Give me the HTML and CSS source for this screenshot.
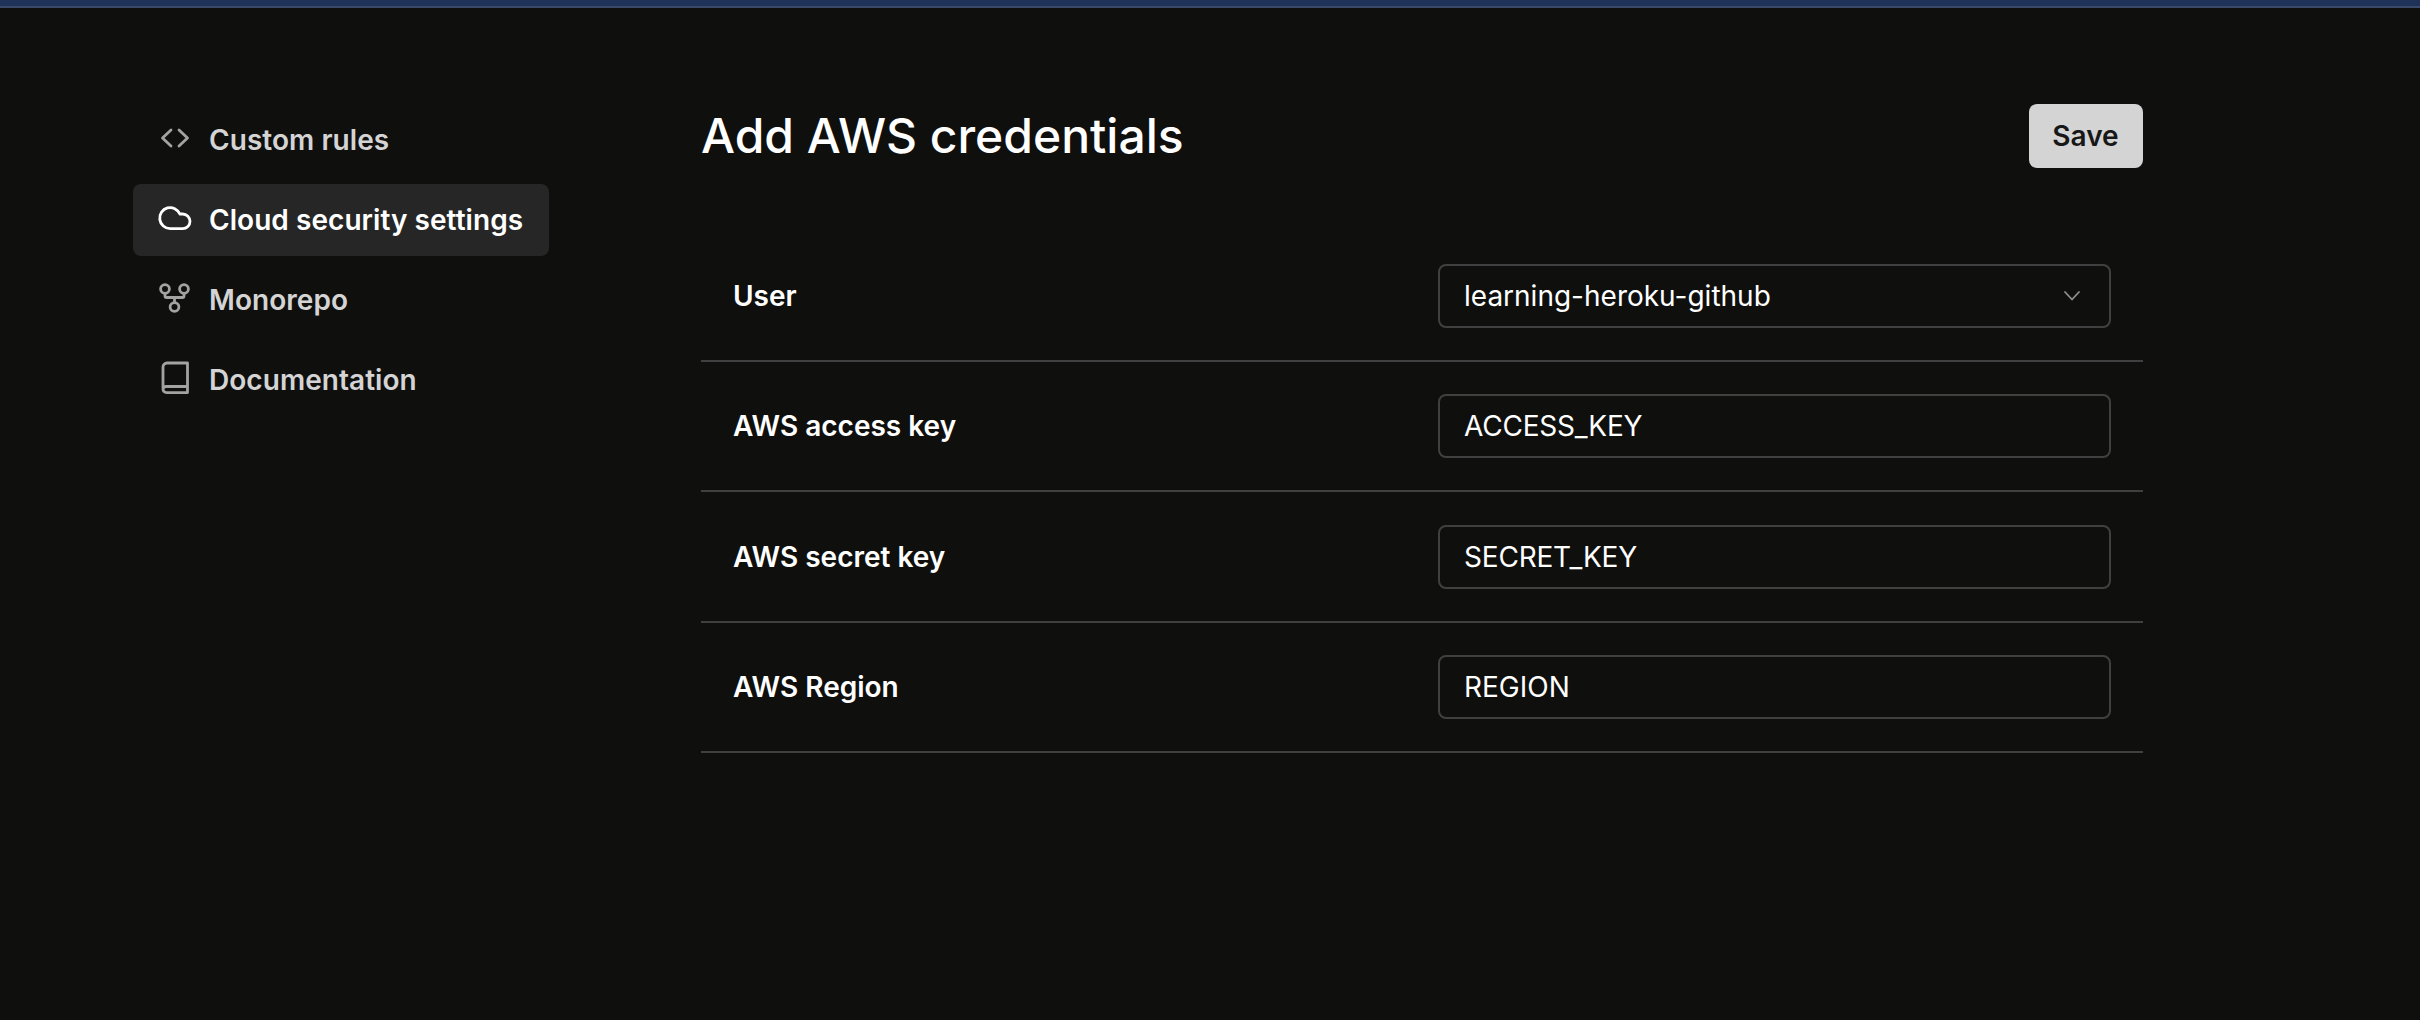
FILE: index.html
```html
<!DOCTYPE html>
<html lang="en">
<head>
<meta charset="utf-8">
<title>Add AWS credentials</title>
<link rel="stylesheet" href="styles.css">
</head>
<body>
<div class="topbar"></div>
<div class="page">
  <nav class="sidebar">
    <a class="nav-item">
      <svg class="icon" viewBox="0 0 40 40"><path d="M16 12l-8.500 8 8.500 8M24 12l8.500 8-8.500 8"/></svg>
      <span>Custom rules</span>
    </a>
    <a class="nav-item active">
      <svg class="icon" viewBox="0 0 40 40"><path d="M28 30.600H15.200A10.500 10.500 0 1 1 24.870 16H27.700A7.300 7.300 0 1 1 27.700 30.600Z"/></svg>
      <span>Cloud security settings</span>
    </a>
    <a class="nav-item">
      <svg class="icon" viewBox="0 0 40 40"><circle cx="10" cy="11" r="4.400"/><circle cx="29" cy="11" r="4.400"/><circle cx="19.500" cy="29" r="4.400"/><path d="M10 15.400v2.600a1.500 1.500 0 0 0 1.500 1.500h16a1.500 1.500 0 0 0 1.500-1.500v-2.600M19.500 19.500v5.100"/></svg>
      <span>Monorepo</span>
    </a>
    <a class="nav-item">
      <svg class="icon" viewBox="0 0 40 40"><path d="M8 31V9a4 4 0 0 1 4-4h20.500v29.600H11.500A3.500 3.500 0 0 1 8 31zM8 31.500a3 3 0 0 1 3-3h21.500"/></svg>
      <span>Documentation</span>
    </a>
  </nav>
  <main class="content">
    <header class="head">
      <h1 class="title">Add AWS credentials</h1>
      <button class="save" type="button">Save</button>
    </header>
    <div class="form">
      <div class="row">
        <label class="label">User</label>
        <div class="field select">
          <span>learning-heroku-github</span>
          <svg class="chevron" viewBox="0 0 20 20"><path d="M3 6l7 7.500L17 6"/></svg>
        </div>
      </div>
      <div class="row">
        <label class="label">AWS access key</label>
        <div class="field tight">ACCESS_KEY</div>
      </div>
      <div class="row">
        <label class="label">AWS secret key</label>
        <div class="field tight">SECRET_KEY</div>
      </div>
      <div class="row">
        <label class="label">AWS Region</label>
        <div class="field">REGION</div>
      </div>
    </div>
  </main>
</div>
</body>
</html>
```

FILE: styles.css
```css
* { box-sizing: border-box; }
html, body { margin: 0; height: 100%; }
body {
  background: #0f0f0e;
  color: #fff;
  font-family: Inter, "Liberation Sans", sans-serif;
  font-size: 28px;
  overflow: hidden;
}
.topbar {
  height: 8px;
  background: #1f3358;
  border-bottom: 2px solid #3a4a6b;
}
.page {
  display: flex;
  align-items: flex-start;
  padding: 96px 0 0 133px;
}
.sidebar {
  width: 416px;
  margin-right: 152px;
  display: flex;
  flex-direction: column;
  gap: 8px;
  flex: none;
}
.nav-item {
  height: 72px;
  display: flex;
  align-items: center;
  gap: 14px;
  padding-left: 22px;
  border-radius: 8px;
  color: #d4d4d4;
  font-weight: 600;
  letter-spacing: 0.050px;
}
.nav-item.active { background: #262626; color: #fff; }
.icon {
  width: 40px;
  height: 40px;
  flex: none;
  fill: none;
  stroke: #a3a3a3;
  stroke-width: 2.800;
  stroke-linecap: round;
  stroke-linejoin: round;
  margin-top: -4px;
}
.active .icon { stroke: #fff; }
.content { width: 1441.500px; flex: none; }
.head {
  display: flex;
  justify-content: space-between;
  align-items: center;
  height: 64px;
  margin-bottom: 63px;
}
.title {
  margin: 0;
  font-size: 48px;
  font-weight: 500;
  line-height: 64px;
}
.save {
  width: 114px;
  height: 64px;
  border: 0;
  border-radius: 8px;
  background: #d4d4d4;
  color: #171717;
  font: 600 28px Inter, "Liberation Sans", sans-serif;
}
.row {
  display: flex;
  align-items: center;
  justify-content: space-between;
  height: 130.500px;
  padding: 1px 32px 0;
  border-bottom: 2px solid #404040;
}
.label { font-weight: 600; }
.field {
  width: 672.500px;
  height: 64px;
  display: flex;
  align-items: center;
  justify-content: space-between;
  padding: 0 24px;
  border: 2px solid #404040;
  border-radius: 8px;
  color: #fff;
}
.field.tight { letter-spacing: -0.200px; }
.chevron {
  width: 20px;
  height: 20px;
  margin-right: 3px;
  fill: none;
  stroke: #8f8f8f;
  stroke-width: 1.800;
  stroke-linecap: round;
  stroke-linejoin: round;
}
```
